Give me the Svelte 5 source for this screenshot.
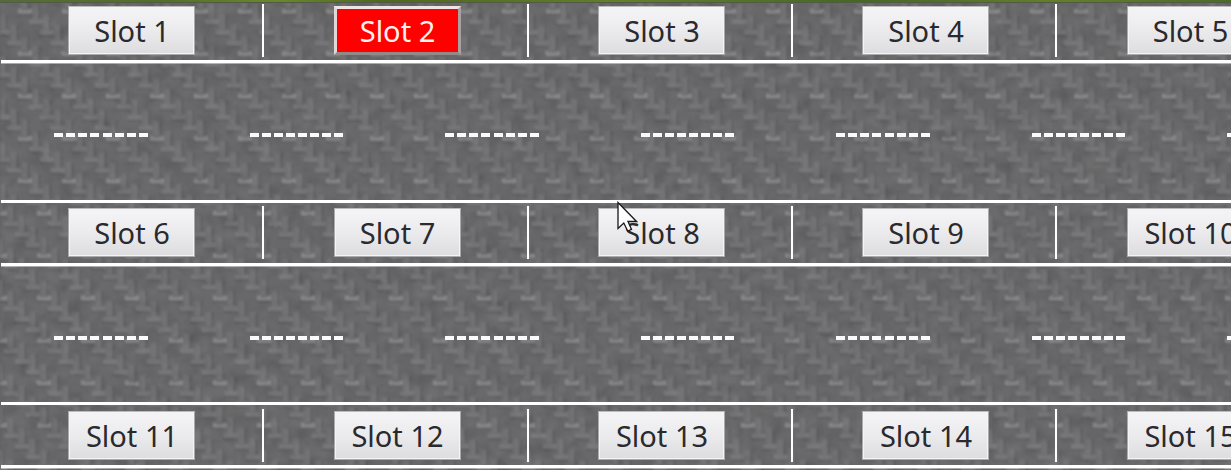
<script>
  const rows = [[1, 2, 3, 4, 5], [6, 7, 8, 9, 10], [11, 12, 13, 14, 15]];
  // Twill weave: every course is shifted by a quarter of the repeat.
  const courses = [0, 1, 2, 3];
  const wraps = [-1, 0, 1];
</script>

<main>
  <svg class="pavement" width="1232" height="470" aria-hidden="true">
    <defs>
      <g id="weave">
        <rect width="44" height="42.4" fill="#666668" />
        {#each courses as i}
          {#each wraps as wx}
            {#each wraps as wy}
              <g transform="translate({i * 11 + wx * 44} {i * 10.6 + wy * 42.4})">
                <path d="M-7 3.4H7" stroke="#5b5b5e" stroke-width="1.5" />
                <path d="M15.4 -7V9" stroke="#5b5b5e" stroke-width="1.5" />
                <rect x="8.5" y="-8" width="6" height="18" fill="#6d6d6f" />
                <rect x="9.5" y="-6" width="4" height="13" fill="#717173" />
                <rect x="-6" y="-2.4" width="14" height="4.8" fill={i === 0 ? '#858587' : '#757577'} />
              </g>
            {/each}
          {/each}
        {/each}
      </g>
      <pattern id="upper" x="24" y="11.2" width="44" height="42.4" patternUnits="userSpaceOnUse"><use href="#weave" /></pattern>
      <pattern id="lower" x="43" y="1.2" width="44" height="42.4" patternUnits="userSpaceOnUse"><use href="#weave" /></pattern>
      <filter id="worn" x="0" y="0" width="100%" height="100%">
        <feTurbulence type="fractalNoise" baseFrequency="0.07" numOctaves="2" seed="4" result="grain" />
        <feDisplacementMap in="SourceGraphic" in2="grain" scale="2" xChannelSelector="R" yChannelSelector="G" result="bent" />
        <feGaussianBlur in="bent" stdDeviation="0.9" result="soft" />
        <feColorMatrix in="grain" type="matrix" values=".33 .33 .33 0 0 .33 .33 .33 0 0 .33 .33 .33 0 0 0 0 0 0 1" result="gray" />
        <feComposite in="soft" in2="gray" operator="arithmetic" k2="1" k3="0.1" k4="-0.047" />
      </filter>
    </defs>
    <g filter="url(#worn)" color-interpolation-filters="sRGB">
      <rect width="1232" height="202" fill="url(#upper)" />
      <rect y="202" width="1232" height="268" fill="url(#lower)" />
    </g>
  </svg>

  <div class="grass"></div>
  {#each rows as row, r}
    <section class="slots row{r}">
      {#each row as n}
        <div class="bay"><button class:taken={n === 2}>Slot {n}</button></div>
      {/each}
    </section>
    {#if r < 2}
      <div class="road">
        {#each Array(7) as _}
          <div class="lane">
            {#each Array(8) as _}<i></i>{/each}
          </div>
        {/each}
      </div>
    {/if}
  {/each}

  <svg class="pointer" width="22" height="34" viewBox="0 0 22 34" aria-hidden="true">
    <path d="M2 1.5V27.5L7.8 22L11.7 30L15.5 28.4L12 20.5H20.5Z" fill="#fff" stroke="#17171c" stroke-width="1.3" />
  </svg>
</main>

<style>
  :global(body) { margin: 0; background: #fff; }
  main {
    position: relative;
    width: 1231px;
    height: 470px;
    overflow: hidden;
    display: grid;
    grid-template-rows: 2px 61px 137px 66px 136px 66px;
    background: #676769;
  }
  .pavement { position: absolute; inset: 0; }
  .grass {
    position: relative;
    background: linear-gradient(90deg, #576b3b, #527026 12%, #6a862f 21%, #4c691d 29%, #627f2c 47%, #466823 65%, #647e2b 80%, #3f6423);
    box-shadow: 0 1px 1px #505943;
  }
  .slots {
    position: relative;
    box-sizing: border-box;
    margin-left: 1px;
    display: grid;
    grid-template-columns: 263px 265px 264px 264px 265px;
    border-bottom: 3px solid #fff;
    box-shadow: 0 1px 0 #ffffff70;
  }
  .row1, .row2 { border-top: 3px solid #fff; }
  .bay {
    box-sizing: border-box;
    margin: 2px 0 3px;
    border-right: 2px solid #fff;
    display: flex;
    justify-content: center;
    align-items: center;
  }
  .row1 .bay { margin: 3px 0 4px; }
  .row2 .bay { margin: 4px 0 3px; }
  button {
    box-sizing: border-box;
    width: 127px;
    height: 49px;
    margin: 0 0 0 3px;
    padding: 0 0 0 1px;
    border: 1px solid #aaaaac;
    border-top-color: #bbb;
    box-shadow: inset 0 0 0 1px #f4f4f5;
    background: linear-gradient(#f3f3f5 10%, #ebebed 50%, #dddde0);
    color: #2a2a2e;
    font: 29px/47px "Noto Sans", "Open Sans", sans-serif;
    white-space: nowrap;
  }
  .bay:first-child button { margin-left: 0; }
  button.taken {
    border: 3px solid;
    border-color: #ece4e5 #aaa1a2 #928989 #dfd7d8;
    background: #fe0000;
    color: #fff0ed;
    box-shadow: none;
    line-height: 43px;
  }
  .road {
    position: relative;
    padding: 70px 0 0 54px;
    display: flex;
    gap: 101.5px;
  }
  .lane { flex: none; width: 94px; height: 4px; display: flex; justify-content: space-between; }
  .lane i { width: 9px; background: #fafafb; }
  .pointer { position: absolute; left: 616px; top: 201px; }
</style>
